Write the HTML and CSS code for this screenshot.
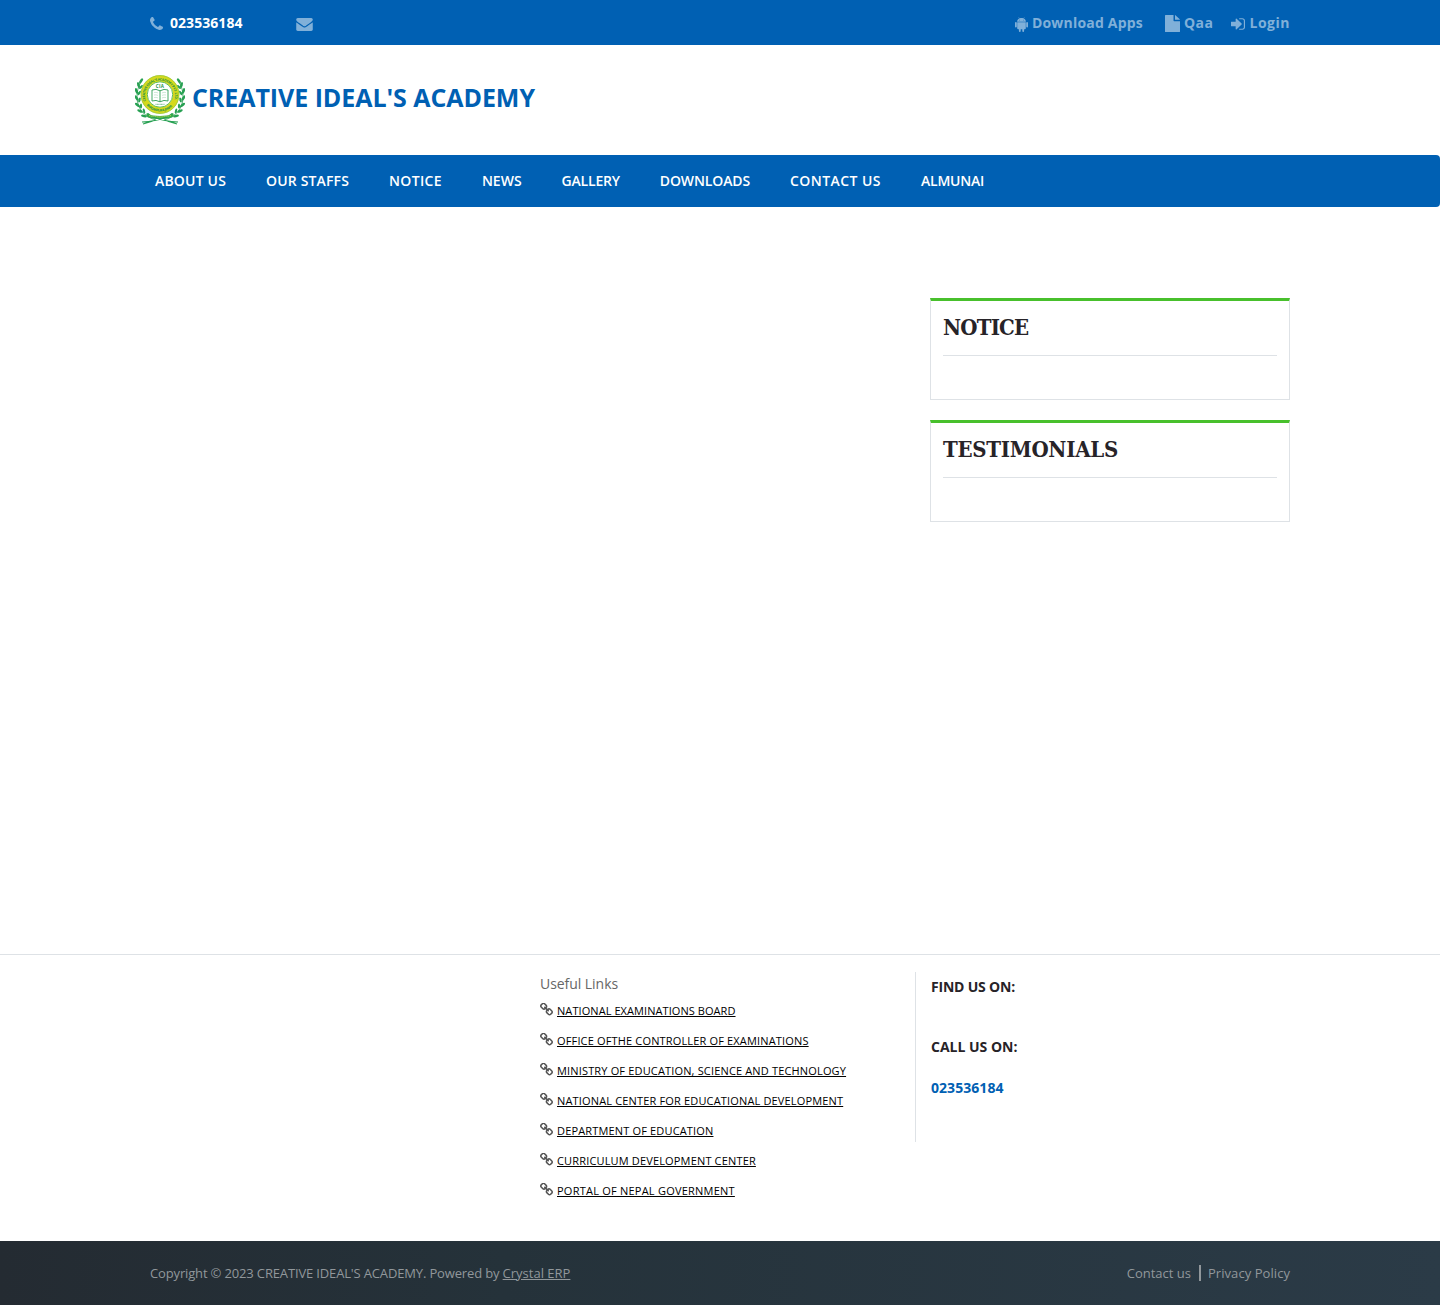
FILE: index.html
```html
<!DOCTYPE html>
<html lang="en">
<head>
<meta charset="utf-8">
<title>CREATIVE IDEAL'S ACADEMY</title>
<link rel="stylesheet" href="styles.css">
</head>
<body>
<svg width="0" height="0" class="defs">
  <symbol id="link" viewBox="80 80 1632 1632"><path d="M1520 1216q0-40-28-68l-208-208q-28-28-68-28-42 0-72 32 3 3 19 18.500t21.500 21.500 15 19 13 25.500 3.500 27.500q0 40-28 68t-68 28q-15 0-27.500-3.500t-25.500-13-19-15-21.500-21.500-18.500-19q-33 31-33 73 0 40 28 68l206 207q27 27 68 27 40 0 68-26l147-146q28-28 28-67zm-703-705q0-40-28-68l-206-207q-28-28-68-28-39 0-68 27l-147 146q-28 28-28 67 0 40 28 68l208 208q27 27 68 27 42 0 72-31-3-3-19-18.500t-21.500-21.500-15-19-13-25.500-3.500-27.500q0-40 28-68t68-28q15 0 27.500 3.500t25.500 13 19 15 21.500 21.500 18.500 19q33-31 33-73zm895 705q0 120-85 203l-147 146q-83 83-203 83-121 0-204-85l-206-207q-83-83-83-203 0-123 88-209l-88-88q-86 88-208 88-120 0-204-84l-208-208q-84-84-84-204t85-203l147-146q83-83 203-83 121 0 204 85l206 207q83 83 83 203 0 123-88 209l88 88q86-88 208-88 120 0 204 84l208 208q84 84 84 204z"/></symbol>
  <symbol id="spray" viewBox="0 0 25 50">
    <path d="M21 45C9 42 2 33 2 22C2 15 4 9 8 4" fill="none" stroke="#2c9d52" stroke-width=".8"/>
    <g fill="#27a052">
      <ellipse cx="6" cy="6" rx="1.300" ry="3" transform="rotate(35 6 6)"/><ellipse cx="3.500" cy="10" rx="1.300" ry="3" transform="rotate(-15 3.500 10)"/><ellipse cx="6" cy="12" rx="1.100" ry="2.600" transform="rotate(45 6 12)"/>
      <ellipse cx="1.500" cy="16" rx="1.300" ry="3" transform="rotate(-20 1.500 16)"/><ellipse cx="4.200" cy="18" rx="1.100" ry="2.600" transform="rotate(35 4.200 18)"/>
      <ellipse cx="1.500" cy="23" rx="1.300" ry="3" transform="rotate(-35 1.500 23)"/><ellipse cx="4.500" cy="25" rx="1.100" ry="2.600" transform="rotate(15 4.500 25)"/>
      <ellipse cx="2.500" cy="30" rx="1.300" ry="3" transform="rotate(-50 2.500 30)"/><ellipse cx="6" cy="31" rx="1.100" ry="2.600"/>
      <ellipse cx="5" cy="36" rx="1.300" ry="3" transform="rotate(-65 5 36)"/><ellipse cx="9" cy="36" rx="1.100" ry="2.600" transform="rotate(-15 9 36)"/>
      <ellipse cx="9" cy="41" rx="1.300" ry="3" transform="rotate(-80 9 41)"/><ellipse cx="14" cy="40" rx="1.100" ry="2.600" transform="rotate(-45 14 40)"/>
    </g>
  </symbol>
</svg>

<div class="topbar"><div class="container topbar-row">
  <div class="top-left">
    <svg class="i-phone" viewBox="192 128 1408 1408"><path d="M1600 1240q0 27-10 70.500t-21 68.500q-21 50-122 106-94 51-186 51-27 0-53-3.500t-57.500-12.500-47-14.500-55.500-20.500-49-18q-98-35-175-83-127-79-264-216t-216-264q-48-77-83-175-3-9-18-49t-20.500-55.500-14.500-47-12.500-57.500-3.500-53q0-92 51-186 56-101 106-122 25-11 68.500-21t70.500-10q14 0 21 3 18 6 53 76 11 19 30 54t35 63.500 31 53.500q3 4 17.500 25t21.500 35.500 7 28.500q0 20-28.500 50t-62 55-62 53-28.500 46q0 9 5 22.500t8.500 20.500 14 24 11.500 19q76 137 174 235t235 174q2 1 19 11.500t24 14 20.500 8.500 22.500 5q18 0 46-28.500t53-62 55-62 50-28.500q14 0 28.500 7t35.500 21.500 25 17.500q25 15 53.500 31t63.500 35 54 30q70 35 76 53 3 7 3 21z"/></svg>
    <span class="phone">023536184</span>
    <svg class="i-mail" viewBox="0 256 1792 1408"><path d="M1792 710v794q0 66-47 113t-113 47h-1472q-66 0-113-47t-47-113v-794q44 49 101 87 362 246 497 345 57 42 92.500 65.500t94.500 48 110 24.500h2q51 0 110-24.500t94.500-48 92.500-65.500q170-123 498-345 57-39 100-87zm0-294q0 79-49 151t-122 123q-376 261-468 325-10 7-42.500 31t-54 38.500-52 32.500-57.500 27-50 9h-2q-23 0-50-9t-57.500-27-52-32.500-54-38.500-42.500-31q-91-64-262-182.500t-205-142.500q-62-42-117-115.500t-55-136.500q0-78 41.500-130t118.500-52h1472q65 0 112.500 47t47.500 113z"/></svg>
  </div>
  <div class="top-right">
    <a class="apps"><svg class="i-android" viewBox="0 0 13 15"><path d="M2.100 4.700C2.200 3.200 3 2.200 4.200 1.600L3.500.3l.3-.2.700 1.300c1.200-.5 2.800-.5 4 0L9.200.1l.3.200-.7 1.300c1.200.6 2 1.600 2.100 3.100zM4.500 2.700a.4.400 0 1 0 0 .8.400.4 0 0 0 0-.8zm4 0a.4.400 0 1 0 0 .8.400.4 0 0 0 0-.8z" fill-rule="evenodd"/><path d="M2.200 5.200h8.600v6.100q0 1-1 1H9.100v1.800a.9.900 0 0 1-1.800 0v-1.800H5.700v1.800a.9.900 0 0 1-1.800 0v-1.800h-.7q-1 0-1-1z"/><rect x="0" y="5" width="1.800" height="5.400" rx=".9"/><rect x="11.200" y="5" width="1.800" height="5.400" rx=".9"/></svg><span>Download Apps</span></a>
    <a class="qaa"><svg class="i-file" viewBox="0 0 15 17"><path d="M0 .6Q0 0 .6 0H8.500v5.600q0 .6.600.6H15v10.200q0 .6-.6.600H.6q-.6 0-.6-.6zM10 0q.4.100.7.400L14.500 4q.3.300.4.800H10z"/></svg><span>Qaa</span></a>
    <a class="login"><svg class="i-login" viewBox="128 256 1536 1280"><path d="M1312 896q0 26-19 45l-544 544q-19 19-45 19t-45-19-19-45v-288h-448q-26 0-45-19t-19-45v-384q0-26 19-45t45-19h448v-288q0-26 19-45t45-19 45 19l544 544q19 19 19 45zm352-352v704q0 119-84.500 203.500t-203.500 84.500h-320q-13 0-22.500-9.500t-9.500-22.500q0-4-1-20t-.5-26.500 3-23.500 10-19.500 20.500-6.500h320q66 0 113-47t47-113v-704q0-66-47-113t-113-47h-312l-11.500-1-11.500-3-8-5.500-7-9-2-13.500q0-4-1-20t-.5-26.500 3-23.500 10-19.500 20.500-6.500h320q119 0 203.500 84.500t84.500 203.500z"/></svg><span>Login</span></a>
  </div>
</div></div>

<header class="brand">
  <svg class="logo" viewBox="0 0 50 50">
    <use href="#spray" width="25" height="50"/>
    <use href="#spray" width="25" height="50" transform="translate(50 0) scale(-1 1)"/>
    <circle cx="25" cy="19.500" r="16" fill="#fff" stroke="#d5d91c" stroke-width="6.400"/>
    <circle cx="25" cy="19.500" r="19" fill="none" stroke="#8fc63b" stroke-width=".7"/>
    <circle cx="25" cy="19.500" r="12.700" fill="#fff" stroke="#4fb548" stroke-width=".9"/>
    <path id="arc-top" d="M11 26A15 15 0 1 1 39 26" fill="none"/>
    <path id="arc-bottom" d="M11.500 30A17.300 17.300 0 0 0 38.500 30" fill="none"/>
    <g fill="#219149" font-family="Open Sans, sans-serif" font-weight="700">
      <text font-size="3.500"><textPath href="#arc-top" textLength="56">CREATIVE IDEAL'S ACADEMY PVT. LTD.</textPath></text>
      <text font-size="3.300"><textPath href="#arc-bottom" textLength="29">BHADRAPUR-8, JHAPA</textPath></text>
      <text x="25" y="12.500" font-size="4.500" text-anchor="middle" letter-spacing=".4">CIA</text>
    </g>
    <path d="M17 15q4-1.600 8 .8 4-2.400 8-.8v11q-4-1.500-8 .8-4-2.300-8-.8zM25 15.800v11" fill="#fff" stroke="#2c9d52" stroke-width=".9"/>
    <path d="M19 17.500q2-.5 4 .4M19 20q2-.5 4 .4M19 22.500q2-.5 4 .4M27 17.900q2-.9 4-.4M27 20.400q2-.9 4-.4M27 22.900q2-.9 4-.4" fill="none" stroke="#b9dfc5" stroke-width=".7"/>
    <path d="M20.500 29.300h9" stroke="#86c59b" stroke-width="1.300" stroke-dasharray="1 .4"/>
    <path d="M11 38.500q14 5 28 0l-1.500 3.700q-12.500 3.700-25 0z" fill="#35a84a"/><path d="M14 40.500q11 3 22 0" fill="none" stroke="#c8de55" stroke-width=".9" stroke-dasharray="1.400 .5"/>
    <path d="M7 47q13-.5 25-5M43 47q-13-.5-25-5M8 49l10-3M42 49l-10-3" fill="none" stroke="#27a052" stroke-width="1.200"/>
  </svg>
  <h1>CREATIVE IDEAL'S ACADEMY</h1>
</header>

<nav class="nav">
  <a>ABOUT US</a><a>OUR STAFFS</a><a>NOTICE</a><a>NEWS</a><a>GALLERY</a><a>DOWNLOADS</a><a>CONTACT US</a><a>ALMUNAI</a>
</nav>

<main class="container main">
  <aside>
    <section class="panel"><h2 class="h-notice">NOTICE</h2></section>
    <section class="panel"><h2 class="h-testimonials">TESTIMONIALS</h2></section>
  </aside>
</main>

<footer>
  <div class="foot-top"><div class="container foot-row">
    <div class="links">
      <h3>Useful Links</h3>
      <ul>
        <li><svg><use href="#link"/></svg><a>NATIONAL EXAMINATIONS BOARD</a></li>
        <li><svg><use href="#link"/></svg><a>OFFICE OFTHE CONTROLLER OF EXAMINATIONS</a></li>
        <li><svg><use href="#link"/></svg><a>MINISTRY OF EDUCATION, SCIENCE AND TECHNOLOGY</a></li>
        <li><svg><use href="#link"/></svg><a>NATIONAL CENTER FOR EDUCATIONAL DEVELOPMENT</a></li>
        <li><svg><use href="#link"/></svg><a>DEPARTMENT OF EDUCATION</a></li>
        <li><svg><use href="#link"/></svg><a>CURRICULUM DEVELOPMENT CENTER</a></li>
        <li><svg><use href="#link"/></svg><a>PORTAL OF NEPAL GOVERNMENT</a></li>
      </ul>
    </div>
    <div class="contact">
      <p class="find">FIND US ON:</p>
      <p class="call">CALL US ON:</p>
      <p class="tel">023536184</p>
    </div>
  </div></div>
  <div class="foot-bottom"><div class="container bottom-row">
    <span class="copyright">Copyright © 2023 CREATIVE IDEAL'S ACADEMY. Powered by <a class="erp">Crystal ERP</a></span>
    <span class="policy"><a>Contact us</a><a class="privacy">Privacy Policy</a></span>
  </div></div>
</footer>
</body>
</html>
```
FILE: styles.css
```css
* { box-sizing: border-box; }
body { margin: 0; background: #fff; color: #666; font: 14px/20px "Open Sans", sans-serif; }
h1, h2, h3, p, ul { margin: 0; padding: 0; }
ul { list-style: none; }
svg { flex: none; }
.defs { display: block; height: 0; }
.container { width: 1140px; margin: 0 auto; }

.topbar { height: 45px; background: #0060b3; color: #80b0d9; font-weight: 700; }
.topbar-row { display: flex; justify-content: space-between; padding-top: 13px; }
.topbar svg { fill: currentColor; }
.top-left, .top-right, .top-right a { display: flex; }
.i-phone { width: 13px; height: 13px; margin: 4px 7px 0 0; }
.phone { width: 126px; color: #fff; letter-spacing: .05px; }
.i-mail { width: 17px; height: 13px; margin-top: 5px; }
.top-right { letter-spacing: .5px; }
.i-android { width: 13px; height: 15px; margin: 4px 4px 0 0; }
.i-file { width: 15px; height: 17px; margin: 2px 4px 0 0; }
.i-login { width: 14px; height: 12px; margin: 5px 5px 0 0; }
.apps { margin-right: 22px; letter-spacing: .2px; }
.qaa { margin-right: 17px; }

.brand { display: flex; height: 110px; padding: 30px 0 0 135px; }
.logo { width: 50px; height: 50px; margin-right: 7px; overflow: visible; }
.brand h1 { color: #0060b3; font-size: 25px; line-height: 44px; font-weight: 700; letter-spacing: -.06px; white-space: nowrap; }

.nav { display: flex; gap: 40px; height: 52px; padding-left: 155px; background: #0060b3; border-radius: 0 4px 4px 0; color: #fff; font-weight: 600; line-height: 52px; }
.nav a:nth-child(1) { letter-spacing: .19px; }
.nav a:nth-child(2) { letter-spacing: .15px; }
.nav a:nth-child(3) { letter-spacing: .33px; }
.nav a:nth-child(5) { letter-spacing: -.21px; }
.nav a:nth-child(6) { letter-spacing: -.13px; }
.nav a:nth-child(7) { letter-spacing: .45px; }
.nav a:nth-child(8) { letter-spacing: -.25px; }

.main { display: flex; justify-content: flex-end; height: 747px; padding-top: 91px; }
aside { width: 360px; }
.panel { height: 102px; margin-bottom: 20px; padding: 0 12px; border: 1px solid #dee2e6; border-top: 3px solid #48c02c; }
.panel h2 { height: 55px; border-bottom: 1px solid #dee2e6; color: #272328; font: 700 22px/53px "Roboto Slab", "DejaVu Serif Condensed", "DejaVu Serif", serif; white-space: nowrap; }
.panel .h-notice { letter-spacing: -.8px; }
.panel .h-testimonials { letter-spacing: -.27px; }

.foot-top { height: 287px; border-top: 1px solid #dee2e6; }
.foot-row { display: flex; padding: 17px 0 0 390px; }
.links { width: 375px; padding-top: 2px; }
.links h3 { font-size: 14px; line-height: 20px; font-weight: 400; letter-spacing: -.05px; }
.links li { display: flex; height: 30px; }
.links li svg { width: 13px; height: 13px; margin: 9px 4px 0 0; fill: #555; }
.links li a { color: #000; font-size: 11px; line-height: 34px; letter-spacing: .16px; text-decoration: underline; white-space: nowrap; }
.links li:first-child a { letter-spacing: .07px; }
.links li:last-child a { letter-spacing: .23px; }
.contact { width: 375px; height: 170px; padding: 5px 15px; border-left: 1px solid #dee2e6; color: #272328; font-weight: 700; }
.find { letter-spacing: -.2px; }
.call { margin-top: 40px; }
.tel { margin-top: 21px; color: #0060b3; letter-spacing: .05px; }

.foot-bottom { height: 64px; background: linear-gradient(to right, #242b32, #25323a 35%, #2b3b47); color: #91979b; font-size: 13px; }
.bottom-row { display: flex; justify-content: space-between; padding-top: 22px; }
.copyright { letter-spacing: -.15px; }
.erp { letter-spacing: 0; text-decoration: underline; }
.policy { display: flex; }
.privacy { position: relative; margin-left: 17px; letter-spacing: .06px; }
.privacy::before { content: ""; position: absolute; left: -9px; top: 2px; width: 2px; height: 16px; background: #91979b; }
```
